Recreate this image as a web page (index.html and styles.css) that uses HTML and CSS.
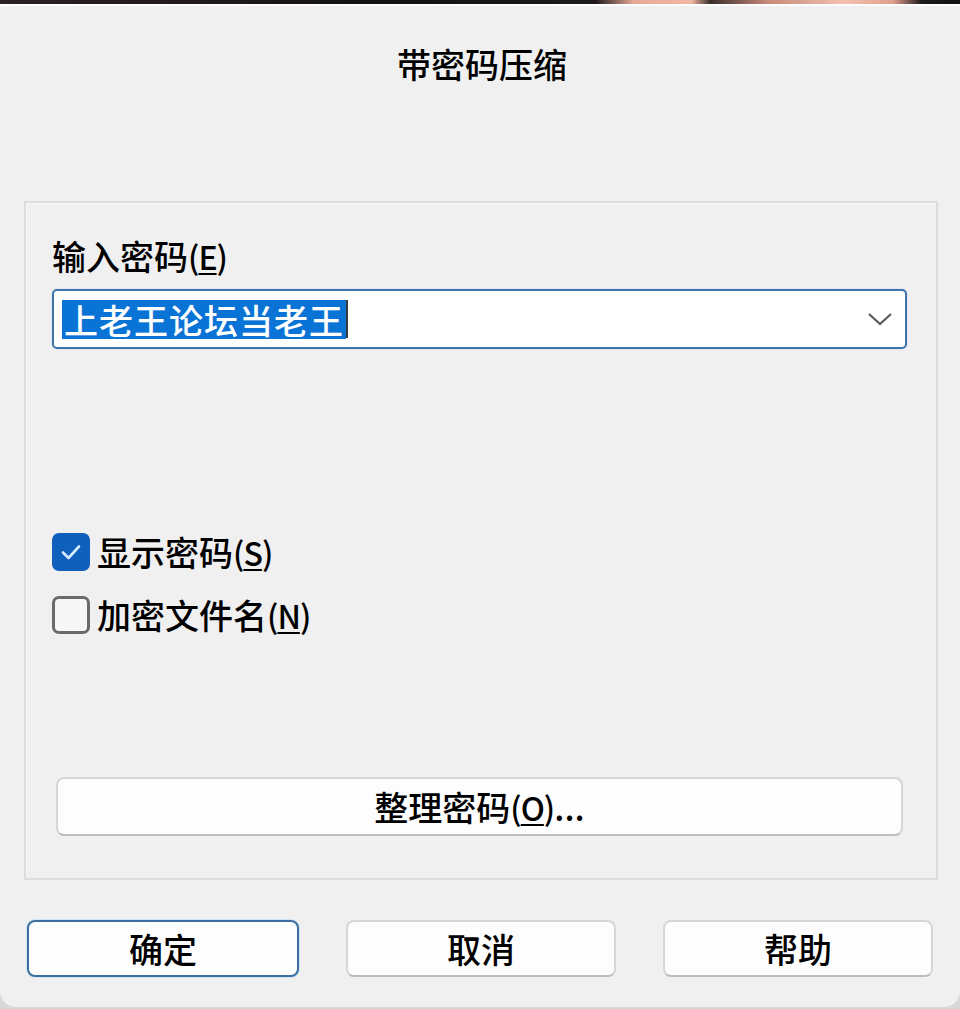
FILE: index.html
```html
<!DOCTYPE html>
<html lang="zh-CN">
<head>
<meta charset="utf-8">
<title>带密码压缩</title>
<link rel="stylesheet" href="styles.css">
</head>
<body>
<div class="wallpaper"></div>
<div class="dialog">
  <div class="title">带密码压缩</div>
  <div class="group">
    <div class="label">输入密码<span class="mn">(<u>E</u>)</span></div>
    <div class="combo">
      <span class="sel">上老王论坛当老王</span><span class="caret"></span>
      <svg class="chev" width="26" height="16" viewBox="0 0 26 16"><path d="M2 3 L13 13 L24 3" fill="none" stroke="#5a5a5a" stroke-width="2.2"/></svg>
    </div>
    <div class="check first">
      <span class="box on"><svg width="38" height="38" viewBox="0 0 38 38"><path d="M11 19.5 L16.5 25 L27 13.5" fill="none" stroke="#d6ebff" stroke-width="2.6" stroke-linecap="round" stroke-linejoin="round"/></svg></span>
      <span class="ctext">显示密码<span class="mn">(<u>S</u>)</span></span>
    </div>
    <div class="check">
      <span class="box"></span>
      <span class="ctext">加密文件名<span class="mn">(<u>N</u>)</span></span>
    </div>
    <div class="btn wide">整理密码<span class="mn">(<u>O</u>)</span>...</div>
  </div>
  <div class="footer">
    <div class="btn default">确定</div>
    <div class="btn">取消</div>
    <div class="btn">帮助</div>
  </div>
</div>
</body>
</html>
```
FILE: styles.css
```css
html, body {
  margin: 0;
  padding: 0;
}
body {
  background: #d8d8d8;
  font-family: "Noto Sans CJK SC", "Noto Sans", sans-serif;
  font-weight: 500;
  color: #000;
  width: 960px;
  height: 1009px;
  overflow: hidden;
}
.wallpaper {
  height: 4px;
  background: linear-gradient(90deg, #2a2224 0%, #151214 40%, #1d1a1a 62%, #e7a996 66%, #f1b8a3 72%, #3a2e2a 74%, #c78a7a 80%, #f3c0b0 88%, #e2a08e 93%, #1e1a1a 96%, #111 100%);
}
.dialog {
  border-top: 2px solid #ffffff;
  height: 1003px;
  box-sizing: border-box;
  background: #f0f0f0;
  border-radius: 0 0 16px 16px;
  overflow: hidden;
}
.title {
  margin-top: 38px;
  text-align: center;
  font-size: 34px;
  line-height: 40px;
  padding-left: 4px;
}
.group {
  margin: 117px 22px 0 24px;
  border: 2px solid #dcdcdc;
  box-shadow: inset 1px 1px 0 #f8f8f8;
  padding: 33px 29px 42px 26px;
  display: flex;
  flex-direction: column;
}
.label {
  font-size: 34px;
  line-height: 40px;
}
.mn {
  letter-spacing: -1px;
  font-size: 32px;
}
.mn u {
  text-decoration-thickness: 2px;
  text-underline-offset: 3px;
}
.combo {
  margin-top: 13px;
  height: 60px;
  box-sizing: border-box;
  border: 2px solid #3f74a6;
  border-radius: 5px;
  background: #ffffff;
  box-shadow: 0 0 0 1px #dbeaf6;
  display: flex;
  align-items: center;
  padding-left: 8px;
  padding-right: 12px;
}
.sel {
  background: #0a74d6;
  color: #ffffff;
  font-size: 34px;
  line-height: 39px;
  padding: 0 2px;
  letter-spacing: 1px;
}
.caret {
  width: 2px;
  height: 38px;
  background: #3a3a3a;
}
.chev {
  margin-left: auto;
}
.check {
  display: flex;
  align-items: center;
  height: 40px;
  margin-top: 23px;
}
.check.first {
  margin-top: 183px;
}
.box {
  width: 38px;
  height: 38px;
  box-sizing: border-box;
  border: 3px solid #6a6a6a;
  border-radius: 7px;
  background: #f7f7f7;
  margin-right: 7px;
  flex: none;
}
.box.on {
  border: none;
  background: #0f5fbd;
}
.box svg {
  display: block;
}
.ctext {
  font-size: 34px;
  line-height: 40px;
}
.btn {
  box-sizing: border-box;
  background: #fdfdfd;
  border: 2px solid #d6d6d6;
  border-bottom-color: #bdbdbd;
  border-radius: 8px;
  font-size: 34px;
  line-height: 40px;
  display: flex;
  align-items: center;
  justify-content: center;
}
.btn.wide {
  margin: 142px 4px 0 4px;
  height: 59px;
}
.footer {
  margin-top: 40px;
  padding-left: 27px;
  display: grid;
  grid-template-columns: 272px 270px 270px;
  column-gap: 47px;
}
.footer .btn {
  height: 57px;
}
.btn.default {
  border: 2px solid #3d6f9e;
  box-shadow: 0 0 0 1px #cfe5f5;
}
```
